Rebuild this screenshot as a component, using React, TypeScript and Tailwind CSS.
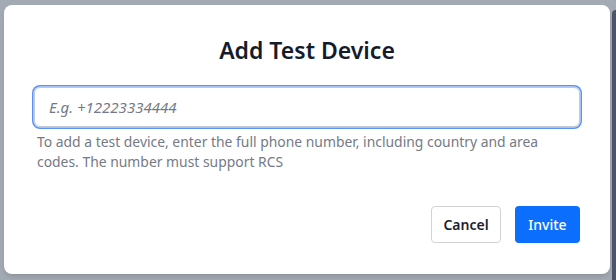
import React from 'react';

const font = { fontFamily: '"Noto Sans", "Open Sans", sans-serif' };

export default function App() {
  return (
    <div className="relative flex h-[280px] w-[616px] items-start overflow-hidden bg-[#a4aab4]" style={font}>
      {/* Modal */}
      <div className="ml-[4px] mt-[5px] flex h-[269px] w-[606px] flex-col rounded-lg bg-white px-[30px] shadow-md">
        <h2 className="mt-[29px] text-center text-[23px] font-semibold leading-[32px] text-[#141c2c]">Add Test Device</h2>

        <input
          type="text"
          placeholder="E.g. +12223334444"
          className="mt-[21px] h-[40px] w-full rounded-md border border-[#c4c8cf] px-[14px] text-[15px] italic text-[#1c2230] outline-none ring-[1.5px] ring-offset-[0.5px] ring-offset-[#eef3fd] ring-[#5b93f5] placeholder:text-[#737987]"
        />

        <p className="mt-[5px] pl-[3px] text-[13.9px] leading-[20px] text-[#747a87]">
          To add a test device, enter the full phone number, including country and area codes. The number must support RCS
        </p>

        <div className="mt-auto mb-[31px] flex justify-end gap-[14px]">
          <button className="h-[37px] w-[70px] rounded-[4px] border border-[#d0d4da] bg-white text-[14px] font-semibold text-[#1c2230]">
            Cancel
          </button>
          <button className="h-[37px] w-[65px] rounded-[4px] bg-[#0b6efd] text-[14px] font-medium text-white">
            Invite
          </button>
        </div>
      </div>

      {/* Page edge behind the overlay */}
      <div className="ml-[2px] mt-[10px] h-[270px] flex-1 rounded-tl-sm bg-[#4b5468]" />
    </div>
  );
}
